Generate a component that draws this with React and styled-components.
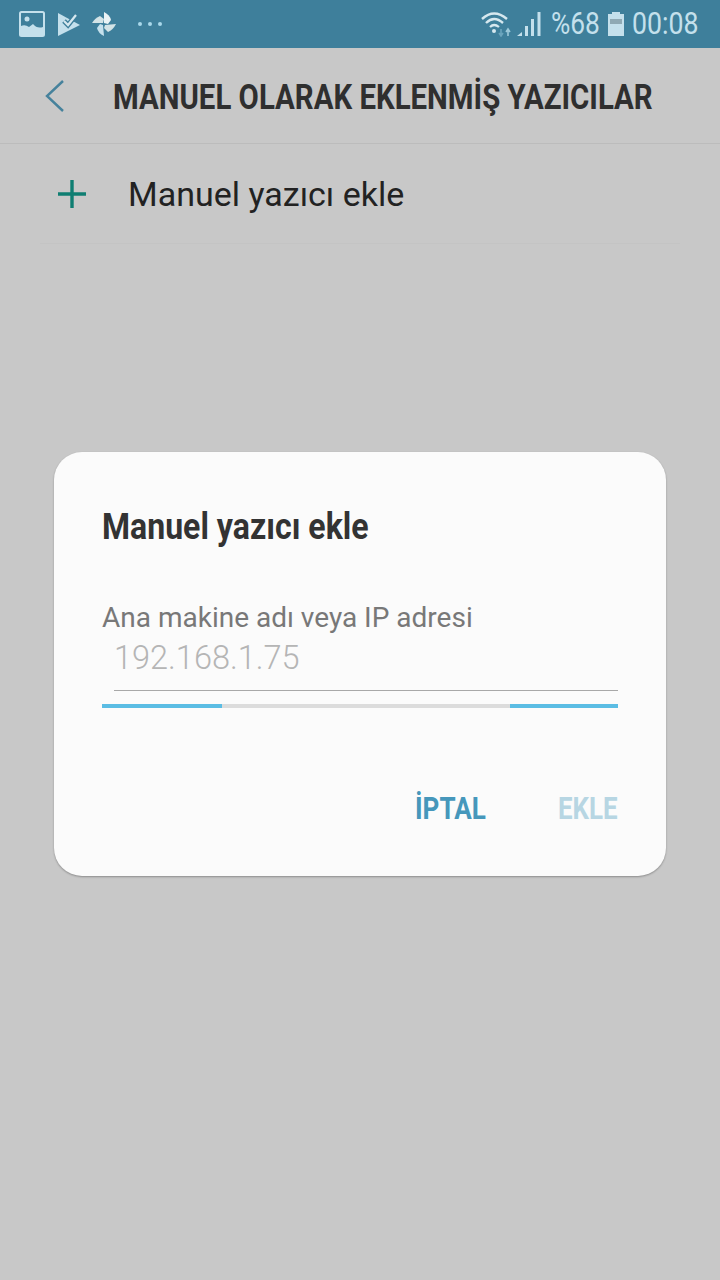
import styled, { createGlobalStyle } from 'styled-components';

const Global = createGlobalStyle`
	html, body {
		margin: 0;
		padding: 0;
		background: #c8c8c8;
	}
	* {
		box-sizing: border-box;
	}
`;
const Page = styled.div`
	width: 720px;
	height: 1280px;
	overflow: hidden;
	display: flex;
	flex-direction: column;
	font-family: Roboto, 'Noto Sans', sans-serif;
	background: #c8c8c8;
`;
const StatusBar = styled.div`
	height: 48px;
	flex: none;
	background: #3e7f9b;
	display: flex;
	align-items: center;
	justify-content: space-between;
	padding: 0 22px 0 19px;
	color: #c4e0ec;
`;
const StatusGroup = styled.div`
	display: flex;
	align-items: center;
	gap: ${(props) => props.$gap || 0}px;
`;
const Squeezed = styled.span`
	display: inline-block;
	white-space: nowrap;
	transform: scaleX(${(props) => props.$x || 1});
	transform-origin: left center;
	width: ${(props) => props.$w}px;
`;
const StatusText = styled(Squeezed)`
	font-size: 31px;
	line-height: 48px;
	font-weight: 400;
	margin-left: ${(props) => props.$left}px;
	color: #c4e0ec;
`;
const Header = styled.div`
	height: 96px;
	flex: none;
	display: flex;
	align-items: center;
	padding-left: 45px;
	border-bottom: 1px solid #bcbcbc;
`;
const Title = styled(Squeezed)`
	font-size: 35px;
	font-weight: 700;
	color: #2f2f2f;
	margin: 4px 0 0 49px;
`;
const AddRow = styled.div`
	height: 100px;
	flex: none;
	margin: 0 40px;
	padding: 0 0 0 18px;
	display: flex;
	align-items: center;
	gap: 42px;
	border-bottom: 1px solid #c4c4c4;
	font-size: 34px;
	color: #222222;
`;
const Dialog = styled.div`
	width: 612px;
	height: 424px;
	flex: none;
	margin: 208px 0 0 54px;
	padding: 56px 48px 0;
	background: #fbfbfb;
	border-radius: 28px;
	box-shadow: 0 1px 2px rgba(0, 0, 0, 0.3);
	display: flex;
	flex-direction: column;
`;
const DialogTitle = styled(Squeezed)`
	font-size: 36px;
	line-height: 38px;
	font-weight: 700;
	color: #333333;
`;
const FieldLabel = styled.div`
	margin-top: 56px;
	font-size: 28px;
	line-height: 32px;
	color: #787878;
`;
const FieldValue = styled.div`
	margin-top: 5px;
	padding-left: 12px;
	font-size: 32.5px;
	line-height: 38px;
	font-weight: 300;
	color: #b5b5b5;
`;
const FieldLine = styled.div`
	margin: 13px 0 0 12px;
	height: 1px;
	background: #a8a8a8;
`;
const Progress = styled.div`
	margin-top: 13px;
	height: 4px;
	display: flex;
	background: #dcdcdc;
	justify-content: space-between;
`;
const ProgressPart = styled.div`
	height: 4px;
	width: ${(props) => props.$w}px;
	background: #5bbde4;
`;
const Actions = styled.div`
	margin-top: 83px;
	display: flex;
	justify-content: flex-end;
	gap: 72px;
`;
const Action = styled(Squeezed)`
	font-size: 31px;
	line-height: 36px;
	font-weight: 700;
	color: ${(props) => props.$color};
`;
const Glyph = styled.svg`
	display: block;
	flex: none;
	margin-left: ${(props) => props.$left || 0}px;
`;

const GalleryIcon = () => (
	<Glyph width="26" height="26" viewBox="0 0 26 26">
		<rect x="1" y="1" width="24" height="24" rx="1.5" fill="none" stroke="#c4e0ec" strokeWidth="2" />
		<circle cx="8" cy="8" r="2.5" fill="#c4e0ec" />
		<path d="M2 21 L2 15 Q6 13 10 16 L14 13 Q18 18 24 16 L24 24 L2 24 Z" fill="#c4e0ec" />
	</Glyph>
);
const PlayCheckIcon = () => (
	<Glyph width="22" height="24" viewBox="0 0 22 24">
		<path d="M0 1 L22 13 L0 24 Z" fill="#c4e0ec" />
		<path d="M6 9 L10 13 L19 2" fill="none" stroke="#3e7f9b" strokeWidth="5" />
		<path d="M6 9 L10 13 L18 3" fill="none" stroke="#d6e8ef" strokeWidth="2.2" />
	</Glyph>
);
const PinwheelIcon = () => (
	<Glyph $left={-1} width="24" height="24" viewBox="0 0 24 24">
		<path d="M11 11 L0 11 Q3 6 8 4 L12 7 Z" fill="#d3e3e6" />
		<path d="M12 11 L12 0 Q18 3 19 8 L16 12 Z" fill="#eaf3f5" />
		<path d="M13 13 L24 12 Q21 18 16 20 L12 16 Z" fill="#d3e3e6" />
		<path d="M11 13 L12 24 Q6 21 5 16 L8 12 Z" fill="#c4e0ec" />
	</Glyph>
);
const MoreIcon = () => (
	<Glyph $left={8} width="26" height="6" viewBox="0 0 26 6">
		<circle cx="3" cy="3" r="2" fill="#a9d8ea" />
		<circle cx="13" cy="3" r="2" fill="#a9d8ea" />
		<circle cx="23" cy="3" r="2" fill="#a9d8ea" />
	</Glyph>
);
const WifiIcon = () => (
	<Glyph width="30" height="26" viewBox="0 0 30 26">
		<path d="M1 8 Q13 -3 26 8" fill="none" stroke="#d6e8ef" strokeWidth="2.4" />
		<path d="M5 12 Q13 4 22 12" fill="none" stroke="#d6e8ef" strokeWidth="2.4" />
		<path d="M9 16 Q13 12 18 16" fill="none" stroke="#d6e8ef" strokeWidth="2.2" />
		<circle cx="13" cy="20" r="2" fill="#d6e8ef" />
		<path d="M20 18 V25 M18 22 L20 25 L22 22" fill="none" stroke="#6ba5bd" strokeWidth="1.6" />
		<path d="M27 25 V18 M25 21 L27 18 L29 21" fill="none" stroke="#9cc9da" strokeWidth="1.6" />
	</Glyph>
);
const SignalIcon = () => (
	<Glyph $left={6} width="24" height="24" viewBox="0 0 24 24">
		<path d="M0 24 L5 24 L5 20 Z" fill="#c4e0ec" />
		<rect x="8" y="14" width="3" height="10" fill="#c4e0ec" />
		<rect x="14" y="7" width="3" height="17" fill="#c4e0ec" />
		<rect x="20.5" y="0" width="3" height="24" fill="#c4e0ec" />
	</Glyph>
);
const BatteryIcon = () => (
	<Glyph $left={8} width="16" height="24" viewBox="0 0 16 24">
		<path d="M4 0 H12 V2 H16 V24 H0 V2 H4 Z" fill="#c4e0ec" />
		<rect x="2" y="7" width="12" height="5" fill="#8fa9b4" />
	</Glyph>
);
const BackIcon = () => (
	<Glyph width="19" height="32" viewBox="0 0 19 32">
		<path d="M18 1 L2 16 L18 31" fill="none" stroke="#46829c" strokeWidth="2.4" />
	</Glyph>
);
const PlusIcon = () => (
	<Glyph width="28" height="28" viewBox="0 0 28 28">
		<path d="M14 0 V28 M0 14 H28" fill="none" stroke="#0f7e72" strokeWidth="3.4" />
	</Glyph>
);

const App = () => (
	<Page>
		<Global />
		<StatusBar>
			<StatusGroup $gap={13}>
				<GalleryIcon />
				<PlayCheckIcon />
				<PinwheelIcon />
				<MoreIcon />
			</StatusGroup>
			<StatusGroup>
				<WifiIcon />
				<SignalIcon />
				<StatusText $x={0.85} $w={49} $left={10}>
					%68
				</StatusText>
				<BatteryIcon />
				<StatusText $x={0.86} $w={66} $left={8}>
					00:08
				</StatusText>
			</StatusGroup>
		</StatusBar>
		<Header>
			<BackIcon />
			<Title $x={0.84} $w={541}>
				MANUEL OLARAK EKLENMİŞ YAZICILAR
			</Title>
		</Header>
		<AddRow>
			<PlusIcon />
			Manuel yazıcı ekle
		</AddRow>
		<Dialog>
			<DialogTitle $x={0.89} $w={265}>
				Manuel yazıcı ekle
			</DialogTitle>
			<FieldLabel>Ana makine adı veya IP adresi</FieldLabel>
			<FieldValue>192.168.1.75</FieldValue>
			<FieldLine />
			<Progress>
				<ProgressPart $w={120} />
				<ProgressPart $w={108} />
			</Progress>
			<Actions>
				<Action $color="#4697bb" $x={0.84} $w={71}>
					İPTAL
				</Action>
				<Action $color="#b7d6e3" $x={0.835} $w={60}>
					EKLE
				</Action>
			</Actions>
		</Dialog>
	</Page>
);
export default App;
